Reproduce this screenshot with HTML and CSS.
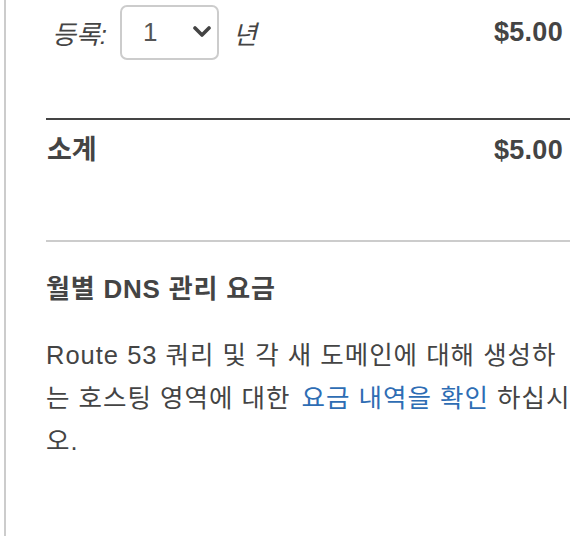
FILE: index.html
```html
<!DOCTYPE html>
<html lang="ko">
<head>
<meta charset="utf-8">
<title>도메인 요금</title>
<link rel="stylesheet" href="styles.css">
</head>
<body>
<div class="panel">
  <div class="reg-row">
    <span class="reg-label">등록:</span>
    <div class="select">
      <span class="select-value">1</span>
      <svg class="chevron" width="18" height="12" viewBox="0 0 18 12"><path d="M2 2 L9 9 L16 2" fill="none" stroke="#444" stroke-width="3.6" stroke-linecap="round" stroke-linejoin="round"/></svg>
    </div>
    <span class="reg-unit">년</span>
    <span class="amount">$5.00</span>
  </div>
  <div class="subtotal">
    <span class="subtotal-label">소계</span>
    <span class="amount">$5.00</span>
  </div>
  <h3 class="title">월별 DNS 관리 요금</h3>
  <p class="desc">Route 53 쿼리 및 각 새 도메인에 대해 생성하는 호스팅 영역에 대한 <a href="#" class="link">요금 내역을 확인</a> 하십시오.</p>
</div>
</body>
</html>
```
FILE: styles.css
```css
html, body {
  margin: 0;
  background: #fff;
}
body {
  font-family: "Liberation Sans", "Noto Sans CJK KR", sans-serif;
  color: #444;
}
.panel {
  margin-left: 4px;
  border-left: 2px solid #ccc;
  min-height: 536px;
  padding: 0 6px 0 40px;
  box-sizing: border-box;
}
.reg-row {
  display: flex;
  align-items: center;
  height: 64px;
  padding: 0 7px 0 6px;
}
.reg-label,
.reg-unit {
  font-style: italic;
  font-size: 26px;
}
.select {
  margin: 0 14px 0 13px;
  width: 99px;
  height: 55px;
  box-sizing: border-box;
  border: 2px solid #ccc;
  border-radius: 7px;
  display: flex;
  align-items: center;
  justify-content: space-between;
  padding: 0 6px 0 21px;
  font-size: 26px;
  color: #555;
}
.chevron {
  display: block;
}
.amount {
  margin-left: auto;
  font-weight: bold;
  font-size: 27px;
  letter-spacing: 0.3px;
}
.subtotal {
  margin-top: 54px;
  border-top: 2px solid #444;
  border-bottom: 2px solid #ccc;
  height: 124px;
  box-sizing: border-box;
  display: flex;
  align-items: flex-start;
  padding: 15px 7px 0 1px;
  line-height: 30px;
}
.subtotal-label {
  font-weight: bold;
  font-size: 27px;
}
.title {
  margin: 33px 0 0;
  font-size: 26px;
  font-weight: bold;
  line-height: 28px;
  letter-spacing: 0.8px;
}
.desc {
  margin: 31px -6px 0 0;
  font-size: 25.5px;
  line-height: 43px;
  letter-spacing: 1px;
}
.link {
  margin-left: 3px;
  color: #2e6db4;
  text-decoration: none;
}
```
